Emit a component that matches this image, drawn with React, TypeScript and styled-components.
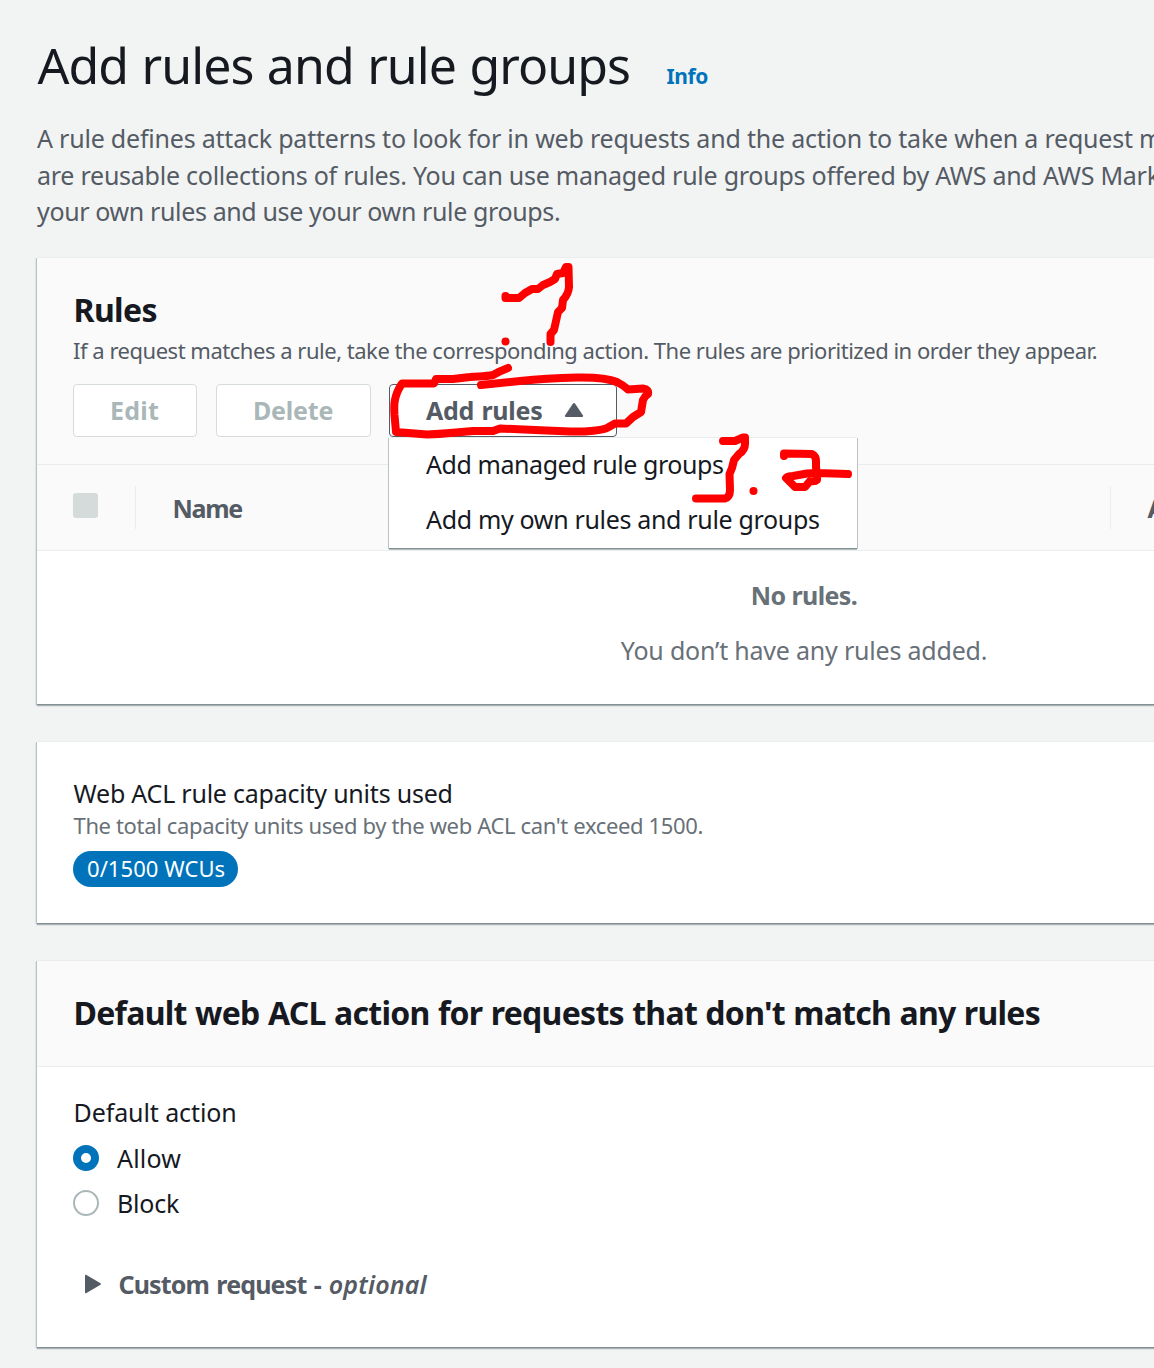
import React from 'react';
import styled, { createGlobalStyle } from 'styled-components';

const GlobalStyle = createGlobalStyle`
  * { box-sizing: border-box; }
  body {
    margin: 0;
    overflow: hidden;
    background: #f2f3f3;
    color: #16191f;
    font-family: 'Noto Sans', 'Open Sans', sans-serif;
    font-size: 25px;
    line-height: 36px;
    font-kerning: normal;
  }
`;

const Page = styled.main`
  position: relative;
  width: 1154px;
  height: 1368px;
  overflow: hidden;
  padding: 35px 0 0 37px;
`;

const Content = styled.div`
  width: 1534px;
`;

const Txt = styled.span<{ $ls?: number; $ws?: number }>`
  letter-spacing: ${(p) => p.$ls ?? 0}px;
  word-spacing: ${(p) => p.$ws ?? 0}px;
  white-space: nowrap;
`;

const TitleRow = styled.header`
  display: flex;
  align-items: baseline;
  gap: 36.5px;
  height: 60px;
`;

const Title = styled.h1`
  margin: 0;
  padding-left: 0.5px;
  font-size: 50px;
  font-weight: 400;
  line-height: 60px;
`;

const InfoLink = styled.a`
  color: #0073bb;
  font-size: 21px;
  font-weight: 700;
`;

const Description = styled.p`
  display: flex;
  flex-direction: column;
  margin: 25px 0 27px;
  height: 110px;
  line-height: 36.5px;
  color: #545b64;
`;

const Panel = styled.section<{ $height: number }>`
  height: ${(p) => p.$height}px;
  margin-bottom: 37px;
  background: #fff;
  border-top: 1px solid #eaeded;
  box-shadow:
    0 1px 0 #839093,
    0 2px 0 #a9b3b5,
    -1px 1px 0 #b9c3c5,
    0 3px 0 #e0e4e4,
    -2px 2px 0 #e0e5e5;
`;

const PanelHeader = styled.div<{ $height: number; $top: number }>`
  height: ${(p) => p.$height}px;
  padding: ${(p) => p.$top}px 37px 0 36px;
  background: #fafafa;
  border-bottom: 1px solid #eaeded;
`;

const PanelTitle = styled.h2`
  margin: 0;
  padding-left: 0.5px;
  font-size: 32px;
  font-weight: 700;
  line-height: 44px;
`;

const PanelNote = styled.p<{ $muted?: boolean }>`
  margin: ${(p) => (p.$muted ? -2 : 2)}px 0 0;
  font-size: 22px;
  line-height: 32px;
  color: ${(p) => (p.$muted ? '#687078' : '#545b64')};
`;

const Actions = styled.div`
  display: flex;
  margin-top: 18px;
`;

const Button = styled.button<{ $width: number; $gap: number }>`
  display: flex;
  align-items: center;
  width: ${(p) => p.$width}px;
  height: 53px;
  margin: 0 ${(p) => p.$gap}px 0 0;
  padding: 0 0 1px 36px;
  border: 1px solid #545b64;
  border-radius: 4px;
  background: #fff;
  color: #545b64;
  font: 700 25px/50px 'Noto Sans', sans-serif;
  &:disabled {
    border-color: #d5dbdb;
    color: #aab7b8;
  }
`;

const Caret = styled.svg`
  margin-left: 21.5px;
  fill: #545b64;
`;

const MenuAnchor = styled.div`
  position: relative;
`;

const Menu = styled.ul`
  position: absolute;
  z-index: 2;
  top: 53px;
  left: 0;
  width: 468px;
  height: 111px;
  margin: 0;
  padding: 0 0 0 37px;
  list-style: none;
  background: #fff;
  border-top: 1px solid #eaeded;
  box-shadow:
    0 1px 0 #839093,
    1px 1px 0 #b9c3c5,
    -1px 1px 0 #b9c3c5,
    0 2px 0 #b5bebf;
`;

const MenuItem = styled.li`
  height: 55px;
  line-height: 53px;
`;

const TableHead = styled.div`
  display: flex;
  align-items: center;
  height: 86px;
  padding-left: 36px;
  background: #fafafa;
  border-bottom: 1px solid #eaeded;
  color: #545b64;
  font-weight: 700;
`;

const Checkbox = styled.span`
  width: 25px;
  height: 25px;
  margin: 0 37px 5px 0;
  border-radius: 3px;
  background: #d5dbdb;
`;

const ColumnHead = styled.div<{ $width: number }>`
  display: flex;
  align-items: center;
  width: ${(p) => p.$width}px;
  height: 43px;
  padding: 0 0 0 36.5px;
  border-left: 1px solid #eaeded;
`;

const Empty = styled.div`
  display: flex;
  flex-direction: column;
  align-items: center;
  gap: 19px;
  padding-top: 26px;
  color: #687078;
`;

const Strong = styled.strong`
  font-weight: 700;
`;

const PanelBody = styled.div<{ $top: number }>`
  padding: ${(p) => p.$top}px 36px 0 36.5px;
`;

const Label = styled.div`
  line-height: 36px;
`;

const Badge = styled.div`
  width: 165px;
  height: 36px;
  margin: 10px 0 0 -0.5px;
  padding-left: 14px;
  border-radius: 18px;
  background: #0073bb;
  color: #fff;
  font-size: 22px;
  line-height: 34px;
`;

const Options = styled.div`
  margin: 5px 0 0 -0.5px;
`;

const Option = styled.label`
  display: flex;
  align-items: center;
  gap: 18px;
  height: 45px;
`;

const Radio = styled.span<{ $checked?: boolean }>`
  width: 26px;
  height: 26px;
  border-radius: 50%;
  border: ${(p) => (p.$checked ? '8px solid #0073bb' : '2px solid #aab7b8')};
  background: #fff;
`;

const Expander = styled.div`
  display: flex;
  align-items: center;
  margin: 41px 0 0 11.5px;
  color: #545b64;
  font-weight: 700;
`;

const ExpandIcon = styled.svg`
  margin-right: 16.5px;
  fill: #545b64;
`;

const Optional = styled.em`
  margin-left: 8px;
  font-weight: 600;
`;

const Ink = styled.svg`
  position: absolute;
  z-index: 3;
  top: 0;
  left: 0;
  fill: none;
  stroke: #ff0000;
  stroke-width: 8;
  stroke-linecap: round;
  stroke-linejoin: round;
  pointer-events: none;
`;

const strokes = [
  'M505.500 296V298H519L525 293L532 289L538 289L543 285L550 282L555 279L557 274L563 273L566 267H568.500L569 287Q568.500 294 563 300L562 308L558 312L554 330L550.500 334V342',
  'M505.500 341.500h.01',
  'M508 368Q500 371 493 375C485 377 477 376 470 377L453 379L436 379L434 383.500H402C393 397 394 407 394.500 415L396 432L427 434.500Q440 434 450 433L473 431H493L500 428.500L535 430L570 431.500C587 432 603 430 607 428L615 423.500H626L633 417L641 412L643 400Q645 396 648 394Q649 389 643 388.500L628 389.500Q623 385 617 382Q605 377 577 377.500C560 378 540 379 520 381L481 385',
  'M723 441H735L743 437.500H745V444Q745 450 739 454L734 460L732 468L729.500 474L730 490Q730 497 725 498.500H696',
  'M753.500 491h.01',
  'M784 456V453.500L812 454Q816 456 816 461V467L817 475V480Q815 482 810 481L805 487H795L790 482L786 478Q788 476 793 476L807 473.500L817 473L848 474',
];

export default function App() {
  return (
    <>
      <GlobalStyle />
      <Page>
        <Content>
          <TitleRow>
            <Title><Txt $ls={-0.95} $ws={1.4}>Add rules and rule groups</Txt></Title>
            <InfoLink><Txt $ls={-0.4}>Info</Txt></InfoLink>
          </TitleRow>
          <Description>
            <Txt $ls={-0.209}>A rule defines attack patterns to look for in web requests and the action to take when a request matches the patterns. Rule groups</Txt>
            <Txt $ls={-0.25}>are reusable collections of rules. You can use managed rule groups offered by AWS and AWS Marketplace sellers or you can write</Txt>
            <Txt $ls={-0.37}>your own rules and use your own rule groups.</Txt>
          </Description>

          <Panel $height={447}>
            <PanelHeader $height={207} $top={30}>
              <PanelTitle><Txt $ls={-0.6}>Rules</Txt></PanelTitle>
              <PanelNote><Txt $ls={-0.48}>If a request matches a rule, take the corresponding action. The rules are prioritized in order they appear.</Txt></PanelNote>
              <Actions>
                <Button disabled $width={124} $gap={19}><Txt $ls={0.24}>Edit</Txt></Button>
                <Button disabled $width={155} $gap={18}><Txt $ls={-0.2}>Delete</Txt></Button>
                <MenuAnchor>
                  <Button $width={228} $gap={0}>
                    <Txt $ls={-0.25} $ws={1}>Add rules</Txt>
                    <Caret width="20" height="16" viewBox="0 0 20 16"><path d="M9 1.500Q10 .4 11 1.500L19 13.500Q19.400 15 18 15H2Q.6 15 1 13.500Z" /></Caret>
                  </Button>
                  <Menu>
                    <MenuItem><Txt $ls={-0.428}>Add managed rule groups</Txt></MenuItem>
                    <MenuItem><Txt $ls={-0.329}>Add my own rules and rule groups</Txt></MenuItem>
                  </Menu>
                </MenuAnchor>
              </Actions>
            </PanelHeader>
            <TableHead>
              <Checkbox />
              <ColumnHead $width={975}><Txt $ls={-1.3}>Name</Txt></ColumnHead>
              <ColumnHead $width={400}><Txt>Action</Txt></ColumnHead>
            </TableHead>
            <Empty>
              <Strong><Txt $ls={-0.6}>No rules.</Txt></Strong>
              <Txt $ls={-0.204}>You don’t have any rules added.</Txt>
            </Empty>
          </Panel>

          <Panel $height={182}>
            <PanelBody $top={33}>
              <Label><Txt $ls={-0.224}>Web ACL rule capacity units used</Txt></Label>
              <PanelNote $muted><Txt $ls={-0.356}>The total capacity units used by the web ACL can't exceed 1500.</Txt></PanelNote>
              <Badge><Txt $ls={0.05}>0/1500 WCUs</Txt></Badge>
            </PanelBody>
          </Panel>

          <Panel $height={387}>
            <PanelHeader $height={106} $top={30}>
              <PanelTitle><Txt $ls={-0.72} $ws={0.7}>Default web ACL action for requests that don't match any rules</Txt></PanelTitle>
            </PanelHeader>
            <PanelBody $top={27}>
              <Label><Txt $ls={-0.09}>Default action</Txt></Label>
              <Options>
                <Option><Radio $checked /><Txt $ls={0.2}>Allow</Txt></Option>
                <Option><Radio /><Txt $ls={-0.2}>Block</Txt></Option>
              </Options>
              <Expander>
                <ExpandIcon width="17" height="20" viewBox="0 0 17 20"><path d="M0 2Q0 .3 1.500 1L15.500 9.200Q16.500 10 15.500 10.800L1.500 19Q0 19.700 0 18Z" /></ExpandIcon>
                <Txt $ls={-0.85} $ws={1.6}>Custom request -</Txt>
                <Optional><Txt $ls={0.15}>optional</Txt></Optional>
              </Expander>
            </PanelBody>
          </Panel>
        </Content>

        <Ink width="1154" height="1368" viewBox="0 0 1154 1368">
          {strokes.map((d) => <path key={d} d={d} />)}
        </Ink>
      </Page>
    </>
  );
}
